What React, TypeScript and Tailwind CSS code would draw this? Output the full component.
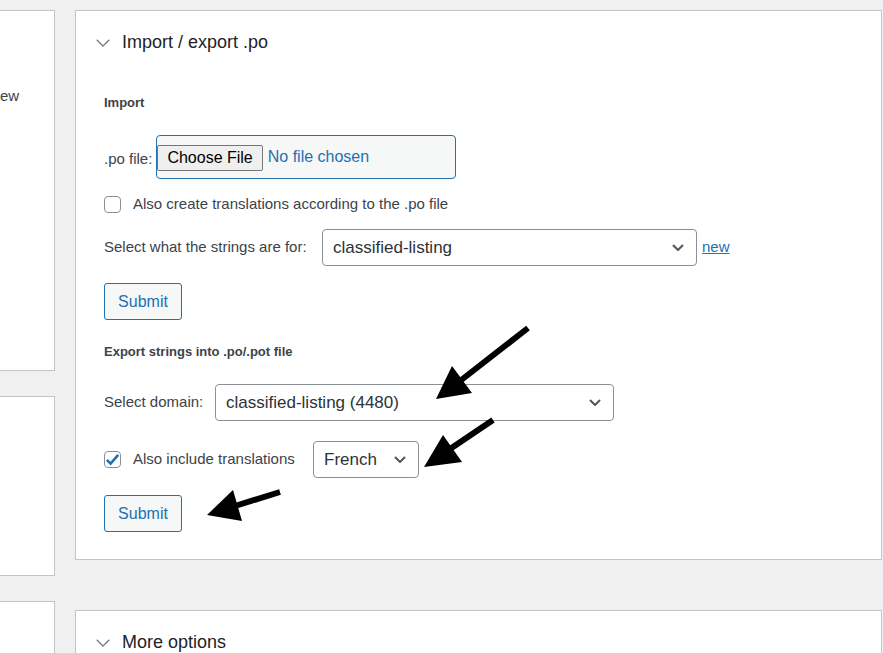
import React from 'react';

const font = { fontFamily: '"Liberation Sans", Arial, sans-serif' };

const HeaderChevron = () => (
  <svg width="14" height="8" viewBox="0 0 14 8" fill="none">
    <path d="M0.7 0.7 L7 7 L13.3 0.7" stroke="#787c82" strokeWidth="1.3" />
  </svg>
);

const SelectChevron = () => (
  <svg width="12" height="7" viewBox="0 0 12 7" fill="none">
    <path d="M1 1 L6 6 L11 1" stroke="#50575e" strokeWidth="2" />
  </svg>
);

const Checkbox: React.FC<{ checked?: boolean }> = ({ checked }) => (
  <span className="w-[17px] h-[17px] shrink-0 rounded-[4px] border border-[#8c8f94] bg-white flex items-center justify-center">
    {checked && (
      <svg width="15" height="13" viewBox="0 0 15 13" fill="none">
        <path d="M1.8 6.8 L5.6 10.6 L13.2 1.8" stroke="#2271b1" strokeWidth="2.6" strokeLinejoin="miter" />
      </svg>
    )}
  </span>
);

const Select: React.FC<{ value: string; className: string }> = ({ value, className }) => (
  <div
    className={`h-[37px] shrink-0 rounded-[4px] border border-[#8c8f94] bg-white flex items-center justify-between pl-[10px] pr-[12px] text-[17px] text-[#2c3338] ${className}`}
  >
    <span>{value}</span>
    <SelectChevron />
  </div>
);

const SubmitButton = () => (
  <button className="w-[78px] h-[37px] rounded-[3px] border border-[#2271b1] bg-[#f6f7f7] text-[16px] text-[#2271b1]">
    Submit
  </button>
);

const Panel: React.FC<{ title: string; className?: string; children?: React.ReactNode }> = ({ title, className, children }) => (
  <div className={`shrink-0 bg-white border border-[#c3c4c7] ${className ?? ''}`}>
    <div className="h-[63px] flex items-center pl-[20px] gap-[12px]">
      <HeaderChevron />
      <h2 className="text-[18px] text-[#1d2327]">{title}</h2>
    </div>
    {children}
  </div>
);

const Arrows = () => (
  <svg className="absolute inset-0 pointer-events-none" width="883" height="653" viewBox="0 0 883 653">
    <line x1="528" y1="328" x2="460" y2="381" stroke="#000" strokeWidth="6" />
    <polygon points="436,399 452,366 472,393" fill="#000" />
    <line x1="493" y1="420" x2="450" y2="449" stroke="#000" strokeWidth="6" />
    <polygon points="424,467 443,435 462,462" fill="#000" />
    <line x1="280" y1="492" x2="235" y2="506" stroke="#000" strokeWidth="6" />
    <polygon points="207,515 233,490 242,521" fill="#000" />
  </svg>
);

export default function App() {
  return (
    <div className="relative w-[883px] h-[653px] overflow-hidden bg-[#f0f0f1] flex items-start pt-[10px] text-[#3c434a]" style={font}>
      <div className="w-[55px] shrink-0 flex flex-col">
        <div className="h-[361px] shrink-0 bg-white border-y border-r border-[#c3c4c7] overflow-hidden">
          <p className="mt-[75px] text-[15px] leading-[20px]">ew</p>
        </div>
        <div className="h-[180px] shrink-0 mt-[25px] bg-white border-y border-r border-[#c3c4c7]" />
        <div className="h-[100px] shrink-0 mt-[25px] bg-white border-y border-r border-[#c3c4c7]" />
      </div>

      <div className="w-[807px] ml-[20px] shrink-0 flex flex-col">
        <Panel title="Import / export .po" className="h-[550px]">
          <div className="px-[28px]">
            <h3 className="mt-[20px] text-[13px] leading-[18px] font-semibold text-[#3c434a]">Import</h3>

            <div className="mt-[23px] flex items-center">
              <span className="text-[15px] mt-[4px]">.po file:</span>
              <div className="ml-[4px] w-[300px] h-[44px] rounded-[4px] border border-[#2271b1] bg-[#f6f7f7] flex items-center">
                <span className="h-[26px] mt-[1px] px-[9px] flex items-center rounded-[2px] border border-[#767676] bg-[#efefef] text-[16px] text-black">
                  Choose File
                </span>
                <span className="ml-[5px] text-[16px] text-[#2271b1]">No file chosen</span>
              </div>
            </div>

            <div className="mt-[13px] h-[24px] flex items-center gap-[12px]">
              <Checkbox />
              <span className="text-[15px]">Also create translations according to the .po file</span>
            </div>

            <div className="mt-[13px] flex items-center">
              <span className="w-[218px] shrink-0 text-[15px]">Select what the strings are for:</span>
              <Select value="classified-listing" className="w-[375px]" />
              <a className="ml-[5px] text-[15px] text-[#2271b1] underline">new</a>
            </div>

            <div className="mt-[17px]">
              <SubmitButton />
            </div>

            <h3 className="mt-[23px] text-[13px] leading-[18px] font-semibold text-[#3c434a]">
              Export strings into .po/.pot file
            </h3>

            <div className="mt-[23px] flex items-center">
              <span className="w-[111px] shrink-0 text-[15px]">Select domain:</span>
              <Select value="classified-listing (4480)" className="w-[399px]" />
            </div>

            <div className="mt-[20px] flex items-center">
              <Checkbox checked />
              <span className="w-[192px] shrink-0 pl-[12px] text-[15px]">Also include translations</span>
              <Select value="French" className="w-[106px]" />
            </div>

            <div className="mt-[17px]">
              <SubmitButton />
            </div>
          </div>
        </Panel>

        <Panel title="More options" className="mt-[50px] h-[100px]" />
      </div>

      <Arrows />
    </div>
  );
}
